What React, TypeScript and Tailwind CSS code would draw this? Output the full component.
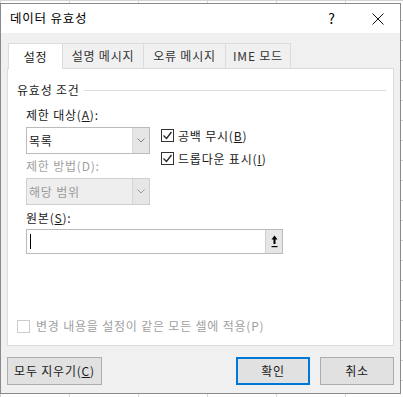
import React from "react";

const font = { fontFamily: '"Noto Sans CJK KR", "Noto Sans", sans-serif' };

function Chevron({ color = "#808080" }: { color?: string }) {
  return (
    <svg width="8" height="5" viewBox="0 0 8 5">
      <path d="M0.5 0.5 L4 4 L7.5 0.5" fill="none" stroke={color} strokeWidth="1" />
    </svg>
  );
}

function Check({ checked, disabled }: { checked?: boolean; disabled?: boolean }) {
  return (
    <div
      className={`w-[13px] h-[13px] border ${disabled ? "border-[#cccccc]" : "border-[#333333]"} bg-white flex items-center justify-center shrink-0`}
    >
      {checked && (
        <svg width="11" height="11" viewBox="0 0 11 11">
          <path d="M1.5 5.5 L4.5 8.5 L9.5 2" fill="none" stroke="#222" strokeWidth="1.3" />
        </svg>
      )}
    </div>
  );
}

export default function App() {
  return (
    <div
      className="w-[403px] h-[397px] bg-white relative overflow-hidden bg-[linear-gradient(90deg,#d4d4d4_1px,transparent_1px),linear-gradient(#d4d4d4_1px,transparent_1px)] bg-[size:69px_20px]"
      style={font}
    >
      <div className="absolute left-0 top-[3px] w-[401px] h-[391px] border border-[#8a8a8a] bg-[#f0f0f0] flex flex-col text-[12px] tracking-[0.8px] text-[#1a1a1a]">
        {/* title bar */}
        <div className="h-[29px] bg-white flex items-center shrink-0">
          <div className="pl-[9px] text-[12.5px] text-black flex-1">데이터 유효성</div>
          <div className="w-[20px] text-center text-[14px] text-black mr-[26px]">?</div>
          <div className="w-[20px] flex justify-center mr-[12px]">
            <svg width="12" height="12" viewBox="0 0 12 12">
              <path d="M0.5 0.5 L11.5 11.5 M11.5 0.5 L0.5 11.5" stroke="#111" strokeWidth="1" />
            </svg>
          </div>
        </div>
        {/* tabs */}
        <div className="flex items-end h-[35px] pl-[7px] shrink-0">
          <div className="w-[55px] h-[26px] bg-white border border-b-0 border-[#dcdcdc] flex items-center justify-center relative top-[1px] z-10">
            설정
          </div>
          <div className="w-[81px] h-[25px] bg-[#f0f0f0] border border-b-0 border-l-0 border-[#dcdcdc] flex items-center justify-center text-[#333]">
            설명 메시지
          </div>
          <div className="w-[82px] h-[25px] bg-[#f0f0f0] border border-b-0 border-l-0 border-[#dcdcdc] flex items-center justify-center text-[#333]">
            오류 메시지
          </div>
          <div className="w-[65px] h-[25px] bg-[#f0f0f0] border border-b-0 border-l-0 border-[#dcdcdc] flex items-center justify-center text-[#333]">
            IME 모드
          </div>
        </div>
        {/* panel */}
        <div className="mx-[6px] h-[278px] bg-white border border-[#dcdcdc] flex flex-col pl-[9px] pr-[7px]">
          <div className="flex items-center mt-[12px] gap-[4px]">
            <span>유효성 조건</span>
            <div className="flex-1 h-px bg-[#dcdcdc] mt-[1px]" />
          </div>
          <div className="pl-[9px] flex">
            <div className="flex flex-col w-[124px]">
              <div className="mt-[7px] leading-[17px]">
                제한 대상(<span className="underline">A</span>):
              </div>
              <div className="mt-[4px] h-[27px] border border-[#bbbbbb] flex">
                <div className="flex-1 flex items-center pl-[2px]">목록</div>
                <div className="w-[17px] bg-[#e6e6e6] border-l border-[#dadada] flex items-center justify-center">
                  <Chevron />
                </div>
              </div>
              <div className="mt-[3px] leading-[17px] text-[#a0a0a0]">제한 방법(D):</div>
              <div className="mt-[4px] h-[27px] border border-[#d0d0d0] bg-[#eeeeee] flex">
                <div className="flex-1 flex items-center pl-[2px] text-[#9a9a9a]">해당 범위</div>
                <div className="w-[17px] bg-[#e6e6e6] border-l border-[#d6d6d6] flex items-center justify-center">
                  <Chevron color="#9a9a9a" />
                </div>
              </div>
            </div>
            <div className="flex flex-col ml-[11px] mt-[30px] gap-[10px]">
              <div className="flex items-center gap-[4px] h-[13px]">
                <Check checked />
                <span>
                  공백 무시(<span className="underline">B</span>)
                </span>
              </div>
              <div className="flex items-center gap-[4px] h-[13px]">
                <Check checked />
                <span>
                  드롭다운 표시(<span className="underline">I</span>)
                </span>
              </div>
            </div>
          </div>
          <div className="pl-[9px] mt-[4px] leading-[17px]">
            원본(<span className="underline">S</span>):
          </div>
          <div className="ml-[9px] mt-[3px] w-[257px] h-[25px] border border-[#bbbbbb] flex">
            <div className="flex-1 flex items-center pl-[3px]">
              <div className="w-px h-[15px] bg-black" />
            </div>
            <div className="w-[17px] bg-[#e6e6e6] border-l border-[#cfcfcf] flex items-center justify-center">
              <svg width="7" height="13" viewBox="0 0 7 13">
                <path d="M3.5 0.5 L6.5 4.5 L4.5 4.5 L4.5 9 L2.5 9 L2.5 4.5 L0.5 4.5 Z" fill="#000" />
                <rect x="0.5" y="11" width="6" height="1.2" fill="#000" />
              </svg>
            </div>
          </div>
          <div className="flex-1" />
          <div className="flex items-center gap-[6px] mb-[10px]">
            <Check disabled />
            <span className="text-[#a0a0a0]">변경 내용을 설정이 같은 모든 셀에 적용(P)</span>
          </div>
        </div>
        {/* buttons */}
        <div className="flex items-center mt-[11px] px-[6px]">
          <div className="w-[95px] h-[28px] bg-[#e1e1e1] border border-[#adadad] flex items-center justify-center">
            모두 지우기(<span className="underline">C</span>)
          </div>
          <div className="flex-1" />
          <div className="w-[74px] h-[28px] bg-[#e1e1e1] border-2 border-[#0078d7] flex items-center justify-center">
            확인
          </div>
          <div className="w-[74px] h-[28px] ml-[10px] bg-[#e1e1e1] border border-[#adadad] flex items-center justify-center">
            취소
          </div>
        </div>
      </div>
    </div>
  );
}
